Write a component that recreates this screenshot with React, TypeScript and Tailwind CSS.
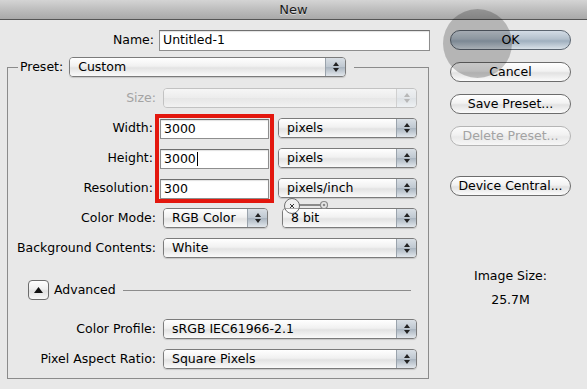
import React from 'react';

const font = { fontFamily: '"DejaVu Sans", "Liberation Sans", sans-serif' };

interface PopupProps {
  width: string;
  text?: string;
  disabled?: boolean;
}

// Aqua style popup menu with the up/down arrows on the right
const Popup: React.FC<PopupProps> = ({ width, text, disabled = false }) => {
  return (
    <div
      className={`flex h-[20px] shrink-0 overflow-hidden rounded-[4px] border ${width} ${
        disabled ? 'border-[#c2c2c2]' : 'border-[#7b7b7b] shadow-[0_1px_1px_rgba(0,0,0,0.15)]'
      }`}
    >
      <div
        className={`flex flex-1 items-center pl-[8px] leading-none ${
          disabled
            ? 'bg-[linear-gradient(to_bottom,#f6f6f6,#ececec_50%,#e6e6e6_51%,#f2f2f2)]'
            : 'bg-[linear-gradient(to_bottom,#ffffff,#f1f1f1_45%,#e3e3e3_55%,#fafafa)] text-black'
        }`}
      >
        {text}
      </div>
      <div
        className={`flex w-[20px] flex-col items-center justify-center gap-[2px] border-l ${
          disabled
            ? 'border-[#d0d0d0] bg-[linear-gradient(to_bottom,#eef0f2,#e4e7ea_50%,#dde1e5_51%,#eef1f3)]'
            : 'border-[#9aa3ac] bg-[linear-gradient(to_bottom,#d9dfe5,#bfc8d1_48%,#aab5c0_52%,#e2e7ec)]'
        }`}
      >
        <svg width="6" height="4" viewBox="0 0 6 4">
          <polygon points="3,0 6,4 0,4" fill={disabled ? '#b8b8b8' : '#222'} />
        </svg>
        <svg width="6" height="4" viewBox="0 0 6 4">
          <polygon points="0,0 6,0 3,4" fill={disabled ? '#b8b8b8' : '#222'} />
        </svg>
      </div>
    </div>
  );
};

interface ButtonProps {
  label: string;
  primary?: boolean;
  disabled?: boolean;
}

const PillButton: React.FC<ButtonProps> = ({ label, primary = false, disabled = false }) => {
  let cls =
    'border-[#6c6c6c] bg-[linear-gradient(to_bottom,#ffffff,#f2f2f2_45%,#e2e2e2_55%,#fbfbfb)] text-black';
  if (primary) {
    cls =
      'border-[#5b6570] bg-[linear-gradient(to_bottom,#d3dce5,#b3c0cc_45%,#9fafbe_55%,#d9e1e8)] text-black';
  }
  if (disabled) {
    cls =
      'border-[#b5b5b5] bg-[linear-gradient(to_bottom,#fbfbfb,#f1f1f1_45%,#e9e9e9_55%,#f7f7f7)] text-[#a3a3a3]';
  }
  return (
    <div
      className={`flex h-[20px] w-[121px] items-center justify-center rounded-full border leading-none ${cls}`}
    >
      {label}
    </div>
  );
};

const TextBox: React.FC<{ value: string; width?: string; caret?: boolean }> = ({
  value,
  width = 'w-full',
  caret = false
}) => (
  <div
    className={`flex h-[20px] items-center border border-[#8e8e8e] border-t-[#6f6f6f] bg-white pl-[3px] leading-none text-black shadow-[inset_0_1px_1px_rgba(0,0,0,0.12)] ${width}`}
  >
    <span>{value}</span>
    {caret && <span className="ml-px h-[14px] w-px bg-black" />}
  </div>
);

const Label: React.FC<{ children: React.ReactNode; muted?: boolean; width?: string }> = ({
  children,
  muted = false,
  width = 'w-[148px]'
}) => (
  <div className={`shrink-0 text-right leading-none ${width} ${muted ? 'text-[#a3a3a3]' : 'text-black'}`}>
    {children}
  </div>
);

export default function App() {
  return (
    <div
      className="relative h-[389px] w-[587px] overflow-hidden bg-[#e8e8e8] text-[12.5px] text-black"
      style={font}
    >
      {/* title bar */}
      <div className="flex h-[20px] items-center justify-center border-b border-[#555] bg-[linear-gradient(to_bottom,#d4d4d4,#b9b9b9_60%,#a9a9a9)] text-[13px] text-[#1b1b1b] [text-shadow:0_1px_0_rgba(255,255,255,0.5)]">
        New
      </div>

      <div className="flex">
        {/* form */}
        <div className="w-[430px] shrink-0">
          <div className="mt-[10px] flex h-[21px] items-center">
            <Label width="w-[154px]">Name:</Label>
            <div className="ml-[5px] h-[21px] w-[271px]">
              <div className="flex h-full items-center border border-[#8e8e8e] border-t-[#6f6f6f] bg-white pl-[3px] leading-none shadow-[inset_0_1px_1px_rgba(0,0,0,0.12)]">
                Untitled-1
              </div>
            </div>
          </div>

          <fieldset className="ml-[7px] mt-[6px] w-[422px] border border-[#8b8b8b] p-0 pb-[9px]">
            <legend className="ml-[10px] p-0">
              <div className="flex h-[20px] items-center pl-[2px] pr-[8px]">
                <span className="leading-none">Preset:</span>
                <div className="ml-[6px]">
                  <Popup width="w-[277px]" text="Custom" />
                </div>
              </div>
            </legend>

            <div className="mt-[11px] flex h-[20px] items-center">
              <Label muted>Size:</Label>
              <div className="ml-[7px]">
                <Popup width="w-[254px]" disabled />
              </div>
            </div>

            <div className="mt-[6px] flex">
              <div className="flex w-[147px] flex-col gap-[10px] pr-[2px] pt-[4px]">
                <div className="flex h-[20px] items-center justify-end leading-none">Width:</div>
                <div className="flex h-[20px] items-center justify-end leading-none">Height:</div>
                <div className="flex h-[20px] items-center justify-end leading-none">Resolution:</div>
              </div>
              <div className="flex w-[119px] flex-col gap-[10px] border-4 border-[#e3170e] px-px pt-px">
                <TextBox value="3000" />
                <TextBox value="3000" caret />
                <TextBox value="300" />
              </div>
              <div className="ml-[4px] flex flex-col gap-[10px] pt-[4px]">
                <Popup width="w-[139px]" text="pixels" />
                <Popup width="w-[139px]" text="pixels" />
                <Popup width="w-[139px]" text="pixels/inch" />
              </div>
            </div>

            <div className="mt-[5px] flex h-[20px] items-center">
              <Label>Color Mode:</Label>
              <div className="ml-[7px]">
                <Popup width="w-[105px]" text="RGB Color" />
              </div>
              <div className="ml-[14px]">
                <Popup width="w-[135px]" text="8 bit" />
              </div>
            </div>

            <div className="mt-[10px] flex h-[20px] items-center">
              <Label>Background Contents:</Label>
              <div className="ml-[7px]">
                <Popup width="w-[254px]" text="White" />
              </div>
            </div>

            <div className="ml-[20px] mr-[17px] mt-[22px] flex h-[20px] items-center">
              <div className="flex h-[20px] w-[21px] items-center justify-center rounded-[4px] border border-[#6c6c6c] bg-[linear-gradient(to_bottom,#ffffff,#efefef_45%,#e0e0e0_55%,#f8f8f8)]">
                <svg width="9" height="6" viewBox="0 0 9 6">
                  <polygon points="4.5,0 9,6 0,6" fill="#111" />
                </svg>
              </div>
              <span className="ml-[5px] leading-none">Advanced</span>
              <div className="ml-[7px] h-px flex-1 bg-[#8c8c8c]" />
            </div>

            <div className="mt-[19px] flex h-[20px] items-center">
              <Label>Color Profile:</Label>
              <div className="ml-[7px]">
                <Popup width="w-[254px]" text="sRGB IEC61966-2.1" />
              </div>
            </div>

            <div className="mt-[10px] flex h-[20px] items-center">
              <Label>Pixel Aspect Ratio:</Label>
              <div className="ml-[7px]">
                <Popup width="w-[254px]" text="Square Pixels" />
              </div>
            </div>
          </fieldset>
        </div>

        {/* buttons */}
        <div className="ml-[20px] flex w-[121px] flex-col">
          <div className="mt-[10px] flex flex-col gap-[12px]">
            <PillButton label="OK" primary />
            <PillButton label="Cancel" />
            <PillButton label="Save Preset..." />
            <PillButton label="Delete Preset..." disabled />
          </div>
          <div className="mt-[30px]">
            <PillButton label="Device Central..." />
          </div>
          <div className="mt-[72px] text-center leading-[16px]">Image Size:</div>
          <div className="mt-[8px] text-center leading-[16px]">25.7M</div>
        </div>
      </div>

      {/* click indicator over the OK button */}
      <div className="absolute left-[443px] top-[9px] h-[69px] w-[69px] rounded-full bg-black/[0.22]" />

      {/* small slider widget lying over the bit depth popup */}
      <svg className="absolute left-[283px] top-[197px]" width="48" height="18" viewBox="0 0 48 18">
        <line x1="16" y1="8" x2="38" y2="8" stroke="#8a8a8a" strokeWidth="2" />
        <circle cx="9" cy="9" r="7.5" fill="rgba(255,255,255,0.35)" stroke="#6f6f6f" strokeWidth="1" />
        <path d="M7 7 L11 11 M11 7 L7 11" stroke="#333" strokeWidth="1" />
        <circle cx="41" cy="8" r="3.5" fill="#e8e8e8" stroke="#8a8a8a" strokeWidth="1.2" />
        <circle cx="41" cy="8" r="1.3" fill="#8a8a8a" />
      </svg>
    </div>
  );
}
